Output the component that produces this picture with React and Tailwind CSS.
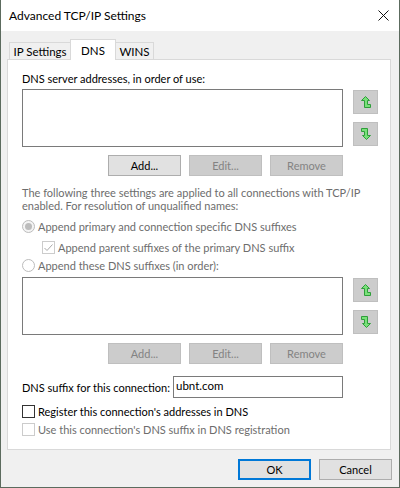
import React from 'react';

const UpIcon = () => (
  <svg width="10" height="12" viewBox="0 0 10 12">
    <polygon
      points="4.5,0.5 8.5,4.5 6.5,4.5 6.5,8.5 9.5,8.5 9.5,11.5 3.5,11.5 3.5,4.5 0.5,4.5"
      fill="#79e079"
      stroke="#2e9e3a"
      strokeWidth="1"
    />
  </svg>
);

const DownIcon = () => (
  <svg width="10" height="12" viewBox="0 0 10 12" className="rotate-180">
    <polygon
      points="4.5,0.5 8.5,4.5 6.5,4.5 6.5,8.5 9.5,8.5 9.5,11.5 3.5,11.5 3.5,4.5 0.5,4.5"
      fill="#79e079"
      stroke="#2e9e3a"
      strokeWidth="1"
    />
  </svg>
);

const Btn = ({ children, disabled }) => (
  <div
    className={
      disabled
        ? 'w-[73px] h-[21px] flex items-center justify-center bg-[#cccccc] border border-[#bfbfbf] text-[#838383]'
        : 'w-[73px] h-[21px] flex items-center justify-center bg-[#e1e1e1] border border-[#adadad] text-black'
    }
  >
    {children}
  </div>
);

const ListWithArrows = () => (
  <div className="flex">
    <div className="w-[321px] h-[58px] bg-white border border-[#7a7a7a]" />
    <div className="ml-[10px] flex flex-col">
      <div className="mt-[1px] w-[25px] h-[24px] bg-[#cccccc] border border-[#bfbfbf] flex items-center justify-center">
        <UpIcon />
      </div>
      <div className="mt-[8px] w-[25px] h-[24px] bg-[#cccccc] border border-[#bfbfbf] flex items-center justify-center">
        <DownIcon />
      </div>
    </div>
  </div>
);

const ButtonRow = ({ addDisabled }) => (
  <div className="w-[321px] flex justify-end gap-[8px]">
    <Btn disabled={addDisabled}>Add...</Btn>
    <Btn disabled>Edit...</Btn>
    <Btn disabled>Remove</Btn>
  </div>
);

export default function App() {
  return (
    <div className="w-[400px] h-[488px] flex flex-col bg-[#f0f0f0] border-l border-r border-b border-[#5c6b5e] text-[11px] leading-[15px] text-black whitespace-nowrap font-['Lato','Liberation_Sans',sans-serif]">
      {/* Title bar */}
      <div className="h-[31px] bg-white flex items-center justify-between pl-[8px] pr-[10px]">
        <span className="text-[12px]">Advanced TCP/IP Settings</span>
        <svg width="11" height="11" viewBox="0 0 11 11">
          <path d="M0.5 0.5 L10.5 10.5 M10.5 0.5 L0.5 10.5" stroke="#111" strokeWidth="1" />
        </svg>
      </div>

      <div className="px-[6px] pt-[7px] flex flex-col">
        {/* Tabs */}
        <div className="flex items-end ml-[2px] h-[21px] relative z-10 text-[11.5px]">
          <div className="w-[62px] h-[17px] border border-b-0 border-[#d9d9d9] bg-[#f0f0f0] flex items-center justify-center">
            IP Settings
          </div>
          <div className="-ml-px w-[46px] h-[21px] -mb-px border border-b-0 border-[#d9d9d9] bg-white flex items-start justify-center pt-[3px]">
            DNS
          </div>
          <div className="-ml-px w-[39px] h-[17px] border border-b-0 border-[#d9d9d9] bg-[#f0f0f0] flex items-center justify-center">
            WINS
          </div>
        </div>

        {/* Panel */}
        <div className="w-[384px] h-[391px] bg-white border border-[#d9d9d9] pl-[14px] flex flex-col">
          <div className="mt-[11px] h-[15px]">DNS server addresses, in order of use:</div>
          <div className="mt-[3px]">
            <ListWithArrows />
          </div>
          <div className="mt-[8px]">
            <ButtonRow />
          </div>

          <div className="mt-[10px] leading-[13px] text-[#6d6d6d]">
            The following three settings are applied to all connections with TCP/IP
            <br />
            enabled. For resolution of unqualified names:
          </div>

          <div className="mt-[7px] h-[15px] flex items-center text-[#6d6d6d]">
            <div className="w-[13px] h-[13px] rounded-full border border-[#bcbcbc] bg-[#f4f4f4] flex items-center justify-center">
              <div className="w-[7px] h-[7px] rounded-full bg-[#bcbcbc]" />
            </div>
            <span className="ml-[3px]">Append primary and connection specific DNS suffixes</span>
          </div>

          <div className="mt-[6px] h-[15px] flex items-center ml-[20px] text-[#6d6d6d]">
            <div className="w-[13px] h-[13px] border border-[#cccccc] bg-white flex items-center justify-center">
              <svg width="9" height="8" viewBox="0 0 9 8">
                <path d="M0.5 4 L3 6.5 L8.5 0.5" fill="none" stroke="#a8a8a8" strokeWidth="1" />
              </svg>
            </div>
            <span className="ml-[3px]">Append parent suffixes of the primary DNS suffix</span>
          </div>

          <div className="mt-[3px] h-[15px] flex items-center text-[#6d6d6d]">
            <div className="w-[13px] h-[13px] rounded-full border border-[#bcbcbc] bg-white" />
            <span className="ml-[3px]">Append these DNS suffixes (in order):</span>
          </div>

          <div className="mt-[4px]">
            <ListWithArrows />
          </div>
          <div className="mt-[8px]">
            <ButtonRow addDisabled />
          </div>

          <div className="mt-[12px] flex items-center">
            <span className="w-[151px]">DNS suffix for this connection:</span>
            <div className="w-[170px] h-[22px] border border-[#7a7a7a] bg-white pl-[2px] pt-[1px] text-[11.5px]">ubnt.com</div>
          </div>

          <div className="mt-[6px] h-[15px] flex items-center">
            <div className="w-[13px] h-[13px] border border-[#333333] bg-white" />
            <span className="ml-[3px]">Register this connection's addresses in DNS</span>
          </div>

          <div className="mt-[3px] h-[15px] flex items-center text-[#6d6d6d]">
            <div className="w-[13px] h-[13px] border border-[#cccccc] bg-white" />
            <span className="ml-[3px]">Use this connection's DNS suffix in DNS registration</span>
          </div>
        </div>

        {/* Footer */}
        <div className="mt-[9px] w-[385px] flex justify-end gap-[8px]">
          <div className="w-[73px] h-[21px] flex items-center justify-center bg-[#e1e1e1] border-2 border-[#0078d7]">
            OK
          </div>
          <div className="w-[73px] h-[21px] flex items-center justify-center bg-[#e1e1e1] border border-[#adadad]">
            Cancel
          </div>
        </div>
      </div>
    </div>
  );
}
